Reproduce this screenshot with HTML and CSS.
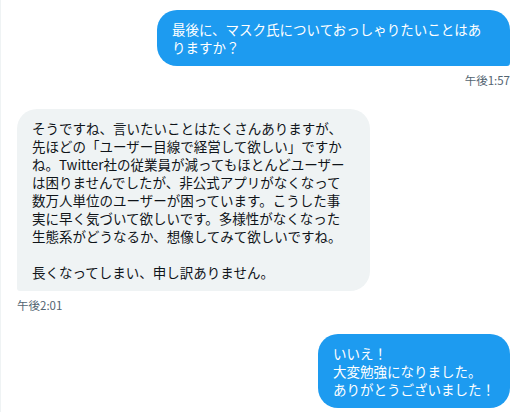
FILE: index.html
```html
<!DOCTYPE html>
<html lang="ja">
<head>
<meta charset="utf-8">
<link rel="stylesheet" href="styles.css">
</head>
<body>
<main class="thread">
  <div class="entry sent">
    <div class="bubble bubble-sent tail-right wide">最後に、マスク氏についておっしゃりたいことはあ<br>りますか？</div>
    <div class="time">午後1:57</div>
  </div>
  <div class="entry received">
    <div class="bubble bubble-received tail-left wide">そうですね、言いたいことはたくさんありますが、<br>先ほどの「ユーザー目線で経営して欲しい」ですか<br>ね。Twitter社の従業員が減ってもほとんどユーザー<br>は困りませんでしたが、非公式アプリがなくなって<br>数万人単位のユーザーが困っています。こうした事<br>実に早く気づいて欲しいです。多様性がなくなった<br>生態系がどうなるか、想像してみて欲しいですね。<br><br>長くなってしまい、申し訳ありません。</div>
    <div class="time">午後2:01</div>
  </div>
  <div class="entry sent">
    <div class="bubble bubble-sent">いいえ！<br>大変勉強になりました。<br>ありがとうございました！</div>
  </div>
</main>
</body>
</html>
```

FILE: styles.css
```css
html, body {
  margin: 0;
  padding: 0;
  background: #ffffff;
}

body {
  font-family: "Noto Sans CJK JP", "Noto Sans", sans-serif;
  width: 524px;
  height: 412px;
  overflow: hidden;
}

.thread {
  box-sizing: border-box;
  height: 412px;
  border-left: 1px solid #eff3f4;
  padding: 10px 14px 0 16px;
  display: flex;
  flex-direction: column;
  gap: 21px;
}

.entry {
  display: flex;
  flex-direction: column;
}

.entry.sent {
  align-items: flex-end;
}

.entry.received {
  align-items: flex-start;
}

.bubble {
  box-sizing: border-box;
  max-width: 353px;
  padding: 10px 15px;
  font-size: 13.5px;
  line-height: 18px;
  border-radius: 20px;
  white-space: nowrap;
  text-spacing-trim: space-all;
}

.bubble.wide {
  width: 353px;
}

.bubble-sent {
  background: #1d9bf0;
  color: #ffffff;
}

.bubble-received {
  background: #eff3f4;
  color: #0f1419;
}

.tail-right {
  border-bottom-right-radius: 3px;
}

.tail-left {
  border-bottom-left-radius: 3px;
}

.time {
  margin-top: 6px;
  font-size: 11.5px;
  line-height: 16px;
  color: #536471;
}
```
